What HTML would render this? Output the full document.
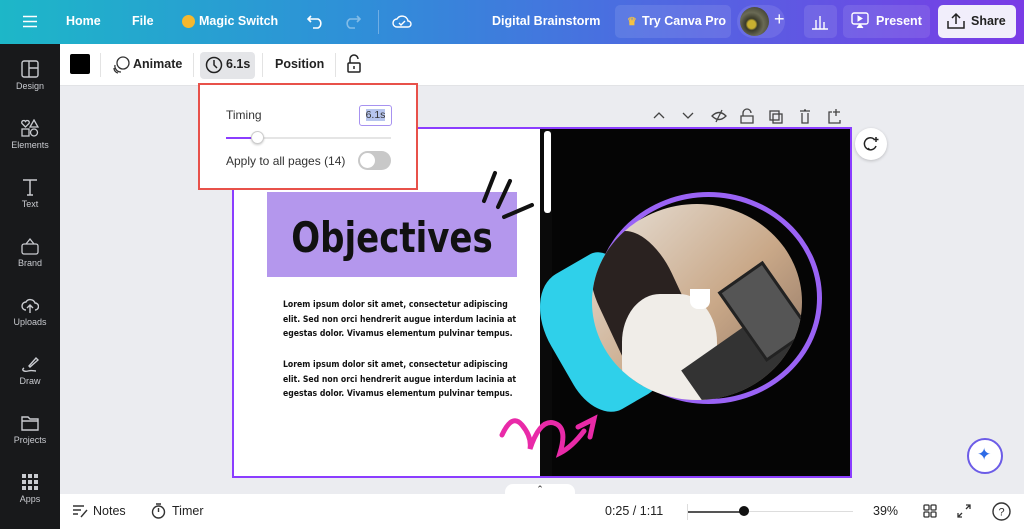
<!DOCTYPE html>
<html><head><meta charset="utf-8"><style>
*{margin:0;padding:0;box-sizing:border-box}
body{width:1024px;height:529px;overflow:hidden;font-family:"Liberation Sans",sans-serif;background:#ebecf0;position:relative}
.top{position:absolute;left:0;top:0;width:1024px;height:44px;background:linear-gradient(90deg,#1db7c8 0%,#2f8fd8 35%,#4a6ee0 60%,#7a3be6 100%);color:#fff;font-weight:bold;font-size:12.5px}
.top span{position:absolute;top:14px}
.side{position:absolute;left:0;top:44px;width:60px;height:485px;background:#18191b;color:#c9cbd0;font-size:9px;text-align:center}
.side div{position:absolute;left:0;width:60px}
.side svg{display:block;margin:0 auto 3px}
.tb{position:absolute;left:60px;top:44px;width:964px;height:42px;background:#fff;border-bottom:1px solid #e2e3e6;font-size:12.5px;font-weight:bold;color:#222}
.tb span{position:absolute;top:13px}
.bot{position:absolute;left:60px;top:494px;width:964px;height:35px;background:#fff;font-size:12.5px;color:#222}
.bot span{position:absolute;top:10px}
.page{position:absolute;left:232px;top:127px;width:620px;height:351px;border:2px solid #8b3dff;background:#fff;overflow:hidden}
.lor{position:absolute;left:49px;font-size:8.6px;font-weight:bold;line-height:14.6px;color:#111;font-family:"DejaVu Sans Condensed","Liberation Sans",sans-serif;white-space:nowrap}
.pop{position:absolute;left:198px;top:83px;width:220px;height:107px;background:#fff;border:2px solid #e8514a;font-size:12px;color:#333;z-index:5}
</style></head><body>
<div class="top">
<svg style="position:absolute;left:23px;top:15px" width="14" height="13"><path d="M0 1.5h14M0 6.5h14M0 11.5h14" stroke="#fff" stroke-width="1.4"/></svg>
<span style="left:66px">Home</span><span style="left:132px">File</span>
<div style="position:absolute;left:182px;top:15px;width:13px;height:13px;border-radius:50%;background:#f5b82e"></div>
<span style="left:199px">Magic Switch</span>
<svg style="position:absolute;left:307px;top:13px" width="18" height="16"><path d="M4 3l-3 3 3 3M1 6h10a5 5 0 0 1 0 9H6" fill="none" stroke="#fff" stroke-width="1.6"/></svg>
<svg style="position:absolute;left:343px;top:13px" width="18" height="16" opacity=".4"><path d="M14 3l3 3-3 3M17 6H7a5 5 0 0 0 0 9h5" fill="none" stroke="#fff" stroke-width="1.6"/></svg>
<div style="position:absolute;left:378px;top:10px;width:1px;height:24px;background:rgba(255,255,255,.3)"></div>
<svg style="position:absolute;left:392px;top:12px" width="20" height="18"><path d="M5 15a4 4 0 0 1 0-8 6 6 0 0 1 11 2 3 3 0 0 1 0 6z M7 11l2 2 4-4" fill="none" stroke="#fff" stroke-width="1.4"/></svg>
<span style="left:492px">Digital Brainstorm</span>
<div style="position:absolute;left:615px;top:5px;width:116px;height:33px;border-radius:5px;background:rgba(255,255,255,.1)"></div>
<span style="left:627px;color:#f5c242;font-size:11px;top:15px">♛</span><span style="left:642px">Try Canva Pro</span>
<div style="position:absolute;left:737px;top:5px;width:48px;height:33px;border-radius:17px;background:rgba(255,255,255,.1)"></div>
<div style="position:absolute;left:740px;top:7px;width:29px;height:29px;border-radius:50%;background:radial-gradient(circle at 40% 60%,#c9b030 0 4px,#3a3a2a 6px,#6a6a55 12px,#2a2a20)"></div>
<span style="left:774px;font-size:18px;top:9px;font-weight:normal">+</span>
<div style="position:absolute;left:804px;top:5px;width:33px;height:33px;border-radius:5px;background:rgba(255,255,255,.1)"></div>
<svg style="position:absolute;left:811px;top:12px" width="18" height="18"><path d="M1 17h16M5 17V8M9 17V4M13 17V10" stroke="#fff" stroke-width="1.4"/></svg>
<div style="position:absolute;left:843px;top:5px;width:87px;height:33px;border-radius:5px;background:rgba(255,255,255,.1)"></div>
<svg style="position:absolute;left:851px;top:12px" width="18" height="18"><rect x="1" y="1" width="16" height="11" rx="2" fill="none" stroke="#fff" stroke-width="1.4"/><path d="M7 4l4 2.5-4 2.5z M6 16l3-4 3 4" fill="#fff" stroke="#fff" stroke-width="1"/></svg>
<span style="left:876px">Present</span>
<div style="position:absolute;left:938px;top:5px;width:78px;height:33px;border-radius:5px;background:#f1eefb"></div>
<svg style="position:absolute;left:947px;top:12px" width="18" height="18"><path d="M1 9v7h16V9M9 12V2M5 6l4-4 4 4" fill="none" stroke="#222" stroke-width="1.5"/></svg>
<span style="left:971px;color:#222">Share</span>
</div>
<div class="side">
<div style="top:16px"><svg width="18" height="18"><rect x="1" y="1" width="16" height="16" rx="2" fill="none" stroke="#c9cbd0" stroke-width="1.4"/><path d="M8 1v16M8 8h9" stroke="#c9cbd0" stroke-width="1.4"/></svg>Design</div>
<div style="top:75px"><svg width="18" height="18" fill="none" stroke="#c9cbd0" stroke-width="1.3"><path d="M4.5 8L1 4.5a2 2 0 0 1 3.5-2 2 2 0 0 1 3.5 2z M13 1l4 7h-8z"/><rect x="1" y="10" width="7" height="7"/><circle cx="13" cy="13.5" r="3.5"/></svg>Elements</div>
<div style="top:134px"><svg width="18" height="18"><path d="M2 2h14M9 2v15M6 17h6" stroke="#c9cbd0" stroke-width="1.5"/></svg>Text</div>
<div style="top:193px"><svg width="18" height="18" fill="none" stroke="#c9cbd0" stroke-width="1.3"><rect x="1" y="7" width="16" height="10" rx="2"/><path d="M5 7l4-5 4 5"/></svg>Brand</div>
<div style="top:252px"><svg width="18" height="18" fill="none" stroke="#c9cbd0" stroke-width="1.4"><path d="M5 14a4 4 0 0 1 0-8 5 5 0 0 1 9 1 3.5 3.5 0 0 1 0 7M9 17V9M6 12l3-3 3 3"/></svg>Uploads</div>
<div style="top:311px"><svg width="18" height="18" fill="none" stroke="#c9cbd0" stroke-width="1.4"><path d="M8 11l7-8 2 2-8 7zM3 13c-3 2 0 4 4 3s6 0 8 0"/></svg>Draw</div>
<div style="top:370px"><svg width="18" height="18" fill="none" stroke="#c9cbd0" stroke-width="1.4"><path d="M1 3h6l2 2h8v11H1z M1 7h16"/></svg>Projects</div>
<div style="top:429px"><svg width="18" height="18" fill="#c9cbd0"><rect x="1" y="1" width="4" height="4"/><rect x="7" y="1" width="4" height="4"/><rect x="13" y="1" width="4" height="4"/><rect x="1" y="7" width="4" height="4"/><rect x="7" y="7" width="4" height="4"/><rect x="13" y="7" width="4" height="4"/><rect x="1" y="13" width="4" height="4"/><rect x="7" y="13" width="4" height="4"/><rect x="13" y="13" width="4" height="4"/></svg>Apps</div>
</div>
<div class="tb">
<div style="position:absolute;left:10px;top:10px;width:20px;height:20px;background:#000;border-radius:2px"></div>
<div style="position:absolute;left:40px;top:9px;width:1px;height:24px;background:#e3e3e3"></div>
<svg style="position:absolute;left:52px;top:12px" width="18" height="18" fill="none" stroke="#333" stroke-width="1.3"><circle cx="11" cy="7" r="6"/><path d="M3 9a6 6 0 0 0 6 7M2 12a5 5 0 0 0 4 5"/></svg>
<span style="left:73px">Animate</span>
<div style="position:absolute;left:133px;top:9px;width:1px;height:24px;background:#e3e3e3"></div>
<div style="position:absolute;left:140px;top:8px;width:55px;height:27px;border-radius:4px;background:#e4e5e8"></div>
<svg style="position:absolute;left:145px;top:12px" width="18" height="18" fill="none" stroke="#222" stroke-width="1.5"><circle cx="9" cy="9" r="7.5"/><path d="M9 4v5l3 3"/></svg>
<span style="left:166px">6.1s</span>
<div style="position:absolute;left:202px;top:9px;width:1px;height:24px;background:#e3e3e3"></div>
<span style="left:215px">Position</span>
<div style="position:absolute;left:275px;top:9px;width:1px;height:24px;background:#e3e3e3"></div>
<svg style="position:absolute;left:286px;top:10px" width="16" height="20" fill="none" stroke="#222" stroke-width="1.5"><path d="M4 9V5a4 4 0 0 1 8 0"/><rect x="2" y="9" width="12" height="9" rx="1"/><path d="M8 12v3"/></svg>
</div>
<div class="pop">
<span style="position:absolute;left:26px;top:23px">Timing</span>
<div style="position:absolute;left:159px;top:20px;width:33px;height:21px;border:1.5px solid #a792f0;border-radius:3px;font-size:10.5px;text-align:center;line-height:18px"><span style="background:#b7c5ee">6.1s</span></div>
<div style="position:absolute;left:26px;top:52px;width:165px;height:2px;background:#e5e5e5"></div>
<div style="position:absolute;left:26px;top:52px;width:32px;height:2px;background:#8b3dff"></div>
<div style="position:absolute;left:51px;top:46px;width:13px;height:13px;border-radius:50%;background:#fff;border:1px solid #ccc;box-shadow:0 1px 2px rgba(0,0,0,.2)"></div>
<span style="position:absolute;left:26px;top:69px">Apply to all pages (14)</span>
<div style="position:absolute;left:158px;top:66px;width:33px;height:19px;border-radius:10px;background:#c8c8c8"><div style="position:absolute;left:2px;top:2px;width:15px;height:15px;border-radius:50%;background:#fff"></div></div>
</div>
<svg style="position:absolute;left:652px;top:108px" width="196" height="16" fill="none" stroke="#444" stroke-width="1.3"><path d="M2 10l5-5 5 5M31 5l5 5 5-5"/><path d="M60 8q7-7 14 0-7 7-14 0zM70 2l-6 12"/><path d="M91 8V5a4 4 0 0 1 8 0M89 8h12v7H89z"/><rect x="118" y="3" width="9" height="9"/><rect x="121" y="6" width="9" height="9"/><path d="M148 3h10M150 5v10h6V5M152 2h2"/><path d="M180 4h-3v11h11v-3M184 1v7M181 4h7"/></svg>
<div class="page">
<div style="position:absolute;left:308px;top:0;width:312px;height:351px;background:#050505"></div>
<div style="position:absolute;left:306px;top:0;width:12px;height:351px;background:#0a0a0a"></div>
<div style="position:absolute;left:310px;top:2px;width:7px;height:82px;background:#fff;border-radius:3px"></div>
<div style="position:absolute;left:318px;top:130px;width:100px;height:150px;background:#2fd0ea;transform:rotate(-30deg);border-radius:40% 20% 40% 30%"></div>
<div style="position:absolute;left:361px;top:63px;width:227px;height:212px;border-radius:50%;border:5px solid #9a63f5"></div>
<div style="position:absolute;left:358px;top:75px;width:210px;height:196px;border-radius:50%;background:linear-gradient(135deg,#e8e2da,#c9a888 55%,#8a7060);overflow:hidden">
<div style="position:absolute;left:10px;top:25px;width:80px;height:150px;background:#2a2220;border-radius:40% 40% 10% 10%;transform:rotate(-25deg)"></div>
<div style="position:absolute;left:30px;top:90px;width:95px;height:120px;background:#f0ede8;border-radius:40%"></div>
<div style="position:absolute;left:95px;top:130px;width:110px;height:55px;background:#333;transform:rotate(-35deg)"></div>
<div style="position:absolute;left:145px;top:65px;width:55px;height:85px;background:#555;transform:rotate(-35deg);border:3px solid #222"></div>
<div style="position:absolute;left:98px;top:85px;width:20px;height:20px;background:#fff;border-radius:0 0 40% 40%"></div>
</div>
<div style="position:absolute;left:33px;top:63px;width:250px;height:85px;background:#b497ed"></div>
<div style="position:absolute;left:8px;top:84px;width:300px;text-align:center;font-size:42px;font-weight:bold;color:#111;font-family:'DejaVu Sans Condensed','Liberation Sans',sans-serif;transform:scaleX(0.9)">Objectives</div>
<svg style="position:absolute;left:246px;top:38px" width="60" height="55" stroke="#111" stroke-width="4" stroke-linecap="round"><path d="M4 34L15 6M18 40L30 14M24 50l28-12"/></svg>
<div class="lor" style="top:169px">Lorem ipsum dolor sit amet, consectetur adipiscing<br>elit. Sed non orci hendrerit augue interdum lacinia at<br>egestas dolor. Vivamus elementum pulvinar tempus.</div>
<div class="lor" style="top:229px">Lorem ipsum dolor sit amet, consectetur adipiscing<br>elit. Sed non orci hendrerit augue interdum lacinia at<br>egestas dolor. Vivamus elementum pulvinar tempus.</div>
<svg style="position:absolute;left:262px;top:270px" width="110" height="70" fill="none" stroke="#e92aa8" stroke-width="5" stroke-linecap="round"><path d="M6 36q10-22 20-10t8 24q10-30 24-26t6 30q12-6 24-22M82 28l16-8-4 18"/></svg>
</div>
<div style="position:absolute;left:855px;top:128px;width:32px;height:32px;border-radius:50%;background:#fff;box-shadow:0 1px 3px rgba(0,0,0,.2)"><svg style="position:absolute;left:8px;top:8px" width="16" height="16" fill="none" stroke="#222" stroke-width="1.5"><path d="M11 3a6 6 0 1 0 2 7M5 14l1-2M13 1v5M10.5 3.5h5"/></svg></div>
<div style="position:absolute;left:967px;top:438px;width:36px;height:36px;border-radius:50%;background:#fff;border:2px solid #6c5ce7"><span style="position:absolute;left:8px;top:5px;color:#2d6be6;font-size:17px">✦</span></div>
<div class="bot">
<svg style="position:absolute;left:13px;top:10px" width="16" height="14" fill="none" stroke="#333" stroke-width="1.4"><path d="M0 2h11M0 6h8M0 10h5M8 13l6-7"/></svg>
<span style="left:33px">Notes</span>
<svg style="position:absolute;left:91px;top:9px" width="15" height="16" fill="none" stroke="#333" stroke-width="1.4"><circle cx="7.5" cy="9" r="6"/><path d="M5 1h5M7.5 5v4"/></svg>
<span style="left:112px">Timer</span>
<span style="left:545px">0:25 / 1:11</span>
<div style="position:absolute;left:627px;top:10px;width:1px;height:16px;background:#ddd"></div>
<div style="position:absolute;left:628px;top:17px;width:55px;height:1.5px;background:#555"></div>
<div style="position:absolute;left:683px;top:17px;width:110px;height:1px;background:#ddd"></div>
<div style="position:absolute;left:679px;top:12px;width:10px;height:10px;border-radius:50%;background:#111"></div>
<span style="left:813px">39%</span>
<svg style="position:absolute;left:863px;top:10px" width="14" height="14" fill="none" stroke="#333" stroke-width="1.3"><rect x="1" y="1" width="5" height="5" rx="1"/><rect x="8" y="1" width="5" height="5" rx="1"/><rect x="1" y="8" width="5" height="5" rx="1"/><rect x="8" y="8" width="5" height="5" rx="1"/></svg>
<svg style="position:absolute;left:897px;top:10px" width="14" height="14" fill="none" stroke="#333" stroke-width="1.3"><path d="M9 1h4v4M13 1L9 5M5 13H1V9M1 13l4-4"/></svg>
<svg style="position:absolute;left:932px;top:8px" width="19" height="19" fill="none" stroke="#333" stroke-width="1.4"><circle cx="9.5" cy="9.5" r="8.5"/><text x="9.5" y="13.5" font-size="11" text-anchor="middle" fill="#333" stroke="none" font-family="Liberation Sans">?</text></svg>
</div>
<div style="position:absolute;left:505px;top:484px;width:70px;height:12px;background:#fff;border-radius:8px 8px 0 0;font-size:9px;text-align:center;color:#333">⌃</div>
</body></html>
